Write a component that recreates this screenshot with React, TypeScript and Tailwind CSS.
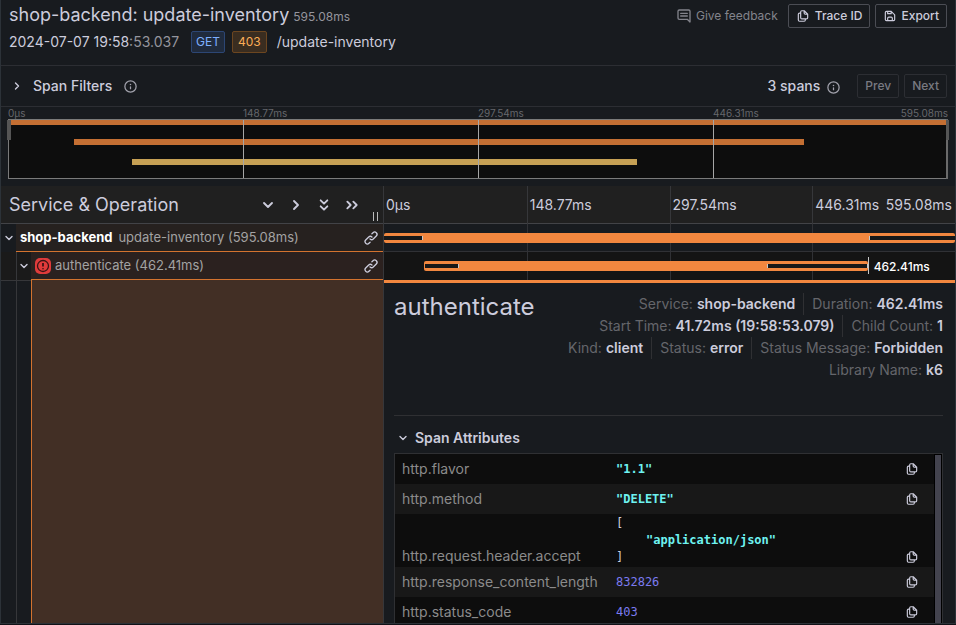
import React from "react";

type IconProps = { d: string; className?: string };

const Glyph = ({ d, className = "size-4" }: IconProps) => (
  <svg viewBox="0 0 24 24" fill="currentColor" className={`shrink-0 ${className}`} aria-hidden="true">
    <path d={d} />
  </svg>
);

const Chevron = ({ d, className = "size-4" }: IconProps) => (
  <svg
    viewBox="0 0 24 24"
    fill="none"
    stroke="currentColor"
    strokeWidth="2.8"
    strokeLinecap="round"
    strokeLinejoin="round"
    className={`shrink-0 ${className}`}
    aria-hidden="true"
  >
    <path d={d} />
  </svg>
);

const COPY =
  "M21,8.94a1.31,1.31,0,0,0-.06-.27l0-.09a1.07,1.07,0,0,0-.19-.28h0l-6-6h0a1.07,1.07,0,0,0-.28-.19.32.32,0,0,0-.09,0A.88.88,0,0,0,14.05,2H10A3,3,0,0,0,7,5V6H6A3,3,0,0,0,3,9V19a3,3,0,0,0,3,3h8a3,3,0,0,0,3-3V18h1a3,3,0,0,0,3-3V9S21,9,21,8.94ZM15,5.41,17.59,8H16a1,1,0,0,1-1-1ZM15,19a1,1,0,0,1-1,1H6a1,1,0,0,1-1-1V9A1,1,0,0,1,6,8H7v7a3,3,0,0,0,3,3h5Zm4-4a1,1,0,0,1-1,1H10a1,1,0,0,1-1-1V5a1,1,0,0,1,1-1h3V7a3,3,0,0,0,3,3h3Z";
const SAVE =
  "m20.71 9.29l-6-6a1 1 0 0 0-.32-.21A1.09 1.09 0 0 0 14 3H6a3 3 0 0 0-3 3v12a3 3 0 0 0 3 3h12a3 3 0 0 0 3-3v-8a1 1 0 0 0-.29-.71ZM9 5h4v2H9Zm6 14H9v-3a1 1 0 0 1 1-1h4a1 1 0 0 1 1 1Zm4-1a1 1 0 0 1-1 1h-1v-3a3 3 0 0 0-3-3h-4a3 3 0 0 0-3 3v3H6a1 1 0 0 1-1-1V6a1 1 0 0 1 1-1h1v3a1 1 0 0 0 1 1h6a1 1 0 0 0 1-1V6.41l4 4Z";
const INFO =
  "M12,2A10,10,0,1,0,22,12,10.01114,10.01114,0,0,0,12,2Zm0,18a8,8,0,1,1,8-8A8.00917,8.00917,0,0,1,12,20Zm0-8.5a1,1,0,0,0-1,1v3a1,1,0,0,0,2,0v-3A1,1,0,0,0,12,11.5Zm0-4a1.25,1.25,0,1,0,1.25,1.25A1.25,1.25,0,0,0,12,7.5Z";
const LINK =
  "M10,17.55,8.23,19.27a2.47,2.47,0,0,1-3.5-3.5l4.54-4.55a2.46,2.46,0,0,1,3.39-.09l.12.1a1,1,0,0,0,1.4-1.43A2.75,2.75,0,0,0,14,9.59a4.46,4.46,0,0,0-6.09.22L3.31,14.36a4.48,4.48,0,0,0,6.33,6.33L11.37,19A1,1,0,0,0,10,17.55ZM20.69,3.31a4.49,4.49,0,0,0-6.33,0L12.63,5A1,1,0,0,0,14,6.45l1.73-1.72a2.47,2.47,0,0,1,3.5,3.5l-4.54,4.55a2.46,2.46,0,0,1-3.39.09l-.12-.1a1,1,0,0,0-1.4,1.43,2.75,2.75,0,0,0,.23.21,4.47,4.47,0,0,0,6.09-.22l4.55-4.55A4.49,4.49,0,0,0,20.69,3.31Z";
const MESSAGE =
  "M17,7H7A1,1,0,0,0,7,9H17a1,1,0,0,0,0-2Zm0,4H7a1,1,0,0,0,0,2H17a1,1,0,0,0,0-2Zm2-9H5A3,3,0,0,0,2,5V15a3,3,0,0,0,3,3H16.59l3.7,3.71A1,1,0,0,0,21,22a.84.84,0,0,0,.38-.08A1,1,0,0,0,22,21V5A3,3,0,0,0,19,2Zm1,16.59-2.29-2.3A1,1,0,0,0,17,16H5a1,1,0,0,1-1-1V5A1,1,0,0,1,5,4H19a1,1,0,0,1,1,1Z";

const DOWN = "M6 9l6 6 6-6";
const RIGHT = "M9 6l6 6-6 6";
const DOUBLE_DOWN = "M7 5l5 5 5-5M7 14l5 5 5-5";
const DOUBLE_RIGHT = "M5 7l5 5-5 5M14 7l5 5-5 5";

const TICKS = ["0µs", "148.77ms", "297.54ms", "446.31ms"];
const TOTAL = "595.08ms";

const FACTS = [
  ["Service:", "shop-backend"],
  ["Duration:", "462.41ms"],
  ["Start Time:", "41.72ms (19:58:53.079)"],
  ["Child Count:", "1"],
  ["Kind:", "client"],
  ["Status:", "error"],
  ["Status Message:", "Forbidden"],
  ["Library Name:", "k6"],
];
const ROW_ENDS = ["Duration:", "Child Count:", "Status Message:", "Library Name:"];

const STRING = "font-bold text-[#6ef2f0]";
const NUMBER = "text-[#7b7bf0]";

const ATTRIBUTES: { name: string; list?: boolean; value: React.ReactNode }[] = [
  { name: "http.flavor", value: <span className={STRING}>"1.1"</span> },
  { name: "http.method", value: <span className={STRING}>"DELETE"</span> },
  {
    name: "http.request.header.accept",
    list: true,
    value: (
      <div className="leading-[17px]">
        <div>[</div>
        <div className={`pl-[30px] ${STRING}`}>"application/json"</div>
        <div>]</div>
      </div>
    ),
  },
  { name: "http.response_content_length", value: <span className={NUMBER}>832826</span> },
  { name: "http.status_code", value: <span className={NUMBER}>403</span> },
];

const Header = () => (
  <header className="flex h-[66px] justify-between border-b border-[#2c2e33] px-2">
    <div>
      <h1 className="flex h-[31px] items-baseline gap-1 text-lg leading-[30px]">
        shop-backend: update-inventory <small className="text-xs text-[#95959d]">595.08ms</small>
      </h1>
      <div className="flex items-center text-sm leading-[22px]">
        <span>
          2024-07-07 19:58<span className="text-[#95959d]">:53.037</span>
        </span>
        <span className="ml-3 flex h-[22px] items-center rounded-xs border border-[#2c4674] bg-[#202b3d] px-1 text-xs text-[#7eb0ff]">
          GET
        </span>
        <span className="ml-[7px] flex h-[22px] items-center rounded-xs border border-[#6c4620] bg-[#3a2d20] px-[5px] text-xs text-[#fbad57]">
          403
        </span>
        <span className="ml-[10px]">/update-inventory</span>
      </div>
    </div>
    <div className="flex h-7 items-end text-xs font-medium">
      <a href="#feedback" className="mr-[10px] flex h-6 items-center gap-1 font-normal text-[#83848c]">
        <Glyph d={MESSAGE} />
        Give feedback
      </a>
      <button className="mr-[5px] flex h-6 items-center gap-[5px] rounded-xs border border-[#4b4d54] px-[7px]">
        <Glyph d={COPY} className="size-[14px]" />
        Trace ID
      </button>
      <button className="flex h-6 items-center gap-1 rounded-xs border border-[#4b4d54] px-[7px]">
        <Glyph d={SAVE} className="size-[14px]" />
        Export
      </button>
    </div>
  </header>
);

const Filters = () => (
  <section className="flex h-[41px] items-center justify-between border-b border-[#2c2e33] px-2">
    <button className="flex items-center text-sm font-medium">
      <Chevron d={RIGHT} className="mr-2 size-4 p-[2px]" />
      Span Filters
      <Glyph d={INFO} className="ml-[11px] size-[15px] text-[#a2a2ac]" />
    </button>
    <div className="flex items-center text-sm font-medium">
      3 spans
      <Glyph d={INFO} className="mt-[2px] mr-4 ml-[6px] size-[15px] text-[#a2a2ac]" />
      <button className="mr-[5px] h-6 rounded-xs border border-[#2c2e33] px-[7px] text-xs text-[#797a82]">Prev</button>
      <button className="h-6 rounded-xs border border-[#2c2e33] px-[7px] text-xs text-[#797a82]">Next</button>
    </div>
  </section>
);

const Minimap = () => (
  <section className="px-[7px] pb-[7px]">
    <div className="flex h-3 text-[10px] leading-3 text-[#66676c]">
      {TICKS.map((t) => (
        <span key={t} className="flex-1">
          {t}
        </span>
      ))}
      <span className="flex w-0 justify-end whitespace-nowrap">{TOTAL}</span>
    </div>
    <svg className="block h-[60px] w-full overflow-visible" shapeRendering="crispEdges" aria-label="Trace overview">
      <rect width="100%" height="60" fill="#0d0d0d" />
      <rect y="1" width="100%" height="5" fill="#c46f33" />
      <rect x="7%" y="20" width="77.7%" height="6" fill="#c46f33" />
      <rect x="13.2%" y="40" width="53.7%" height="6" fill="#c6a054" />
      <rect x="25%" width="1" height="60" fill="#a6a6a6" />
      <rect x="50%" width="1" height="60" fill="#a6a6a6" />
      <rect x="75%" width="1" height="60" fill="#a6a6a6" />
      <rect width="100%" height="1" fill="#7a7a7a" />
      <rect y="59" width="100%" height="1" fill="#7a7a7a" />
      <rect width="1" height="60" fill="#7a7a7a" />
      <g transform="translate(-2 0)">
        <rect x="100%" width="2" height="60" fill="#6a6a6a" />
        <rect x="100%" y="1" width="3" height="20" fill="#555" />
      </g>
      <rect x="-1" y="1" width="4" height="20" fill="#555" />
    </svg>
  </section>
);

const TimeGrid = ({ children, className = "" }: { children?: React.ReactNode; className?: string }) => (
  <div className={`relative grid grid-cols-4 ${className}`}>
    {TICKS.map((t, i) => (
      <div key={t} className={i === 0 ? "" : "border-l border-[#303135]"} />
    ))}
    {children}
  </div>
);

const Critical = ({ className }: { className: string }) => (
  <div className={`absolute top-[3px] h-1 border-[#c8c8c8] bg-[#181818] ${className}`} />
);

const TimelineHeader = () => (
  <div className="grid h-[38px] grid-cols-[383px_1fr] border-b border-[#424347] bg-[#202020]">
    <div className="flex items-center border-r border-[#36373a] pl-2">
      <h2 className="flex-1 text-lg leading-none">Service &amp; Operation</h2>
      <div className="flex gap-3">
        <button aria-label="Expand one level">
          <Chevron d={DOWN} />
        </button>
        <button aria-label="Collapse one level">
          <Chevron d={RIGHT} />
        </button>
        <button aria-label="Expand all">
          <Chevron d={DOUBLE_DOWN} />
        </button>
        <button aria-label="Collapse all">
          <Chevron d={DOUBLE_RIGHT} />
        </button>
      </div>
      <div className="mb-[3px] ml-[13px] mr-[5px] h-[9px] w-[5px] self-end border-x border-[#bbb]" />
    </div>
    <div className="grid grid-cols-4 text-sm leading-[38px]">
      {TICKS.map((t, i) => (
        <div
          key={t}
          className={`flex justify-between whitespace-nowrap ${i === 0 ? "pl-[2px]" : "border-l border-[#36373a] pl-[2px]"}`}
        >
          <span>{t}</span>
          {i === 3 && <span className="pr-[3px]">{TOTAL}</span>}
        </div>
      ))}
    </div>
  </div>
);

const SpanRows = () => (
  <>
    <div className="grid h-7 grid-cols-[383px_1fr]">
      <div className="flex border-r border-[#36373a]">
        <button aria-label="Toggle shop-backend" className="flex w-[15px] items-center justify-center">
          <Chevron d={DOWN} className="size-3" />
        </button>
        <div className="flex flex-1 items-center border-b border-[#d4732f] bg-[#26211f] pl-1 pr-1 text-[13px]">
          <strong className="mr-[6px] font-bold text-white">shop-backend</strong>
          <span className="flex-1 text-[#a3a3a3]">update-inventory (595.08ms)</span>
          <a href="#span-1" aria-label="Link to update-inventory">
            <Glyph d={LINK} />
          </a>
        </div>
      </div>
      <TimeGrid className="border-b border-[#303135]">
        <div className="absolute inset-x-0 top-[9px] h-[10px] rounded-xs bg-[#f2873f]">
          <Critical className="left-0 w-[39px] border-r" />
          <Critical className="right-0 w-[86px] border-l" />
        </div>
      </TimeGrid>
    </div>
    <div className="grid h-7 grid-cols-[383px_1fr]">
      <div className="flex border-r border-[#36373a]">
        <div className="w-4 border-r border-[#36373a] bg-[#1a1a1a]" />
        <button
          aria-label="Toggle authenticate"
          className="flex w-[14px] items-center justify-center bg-[#1a1a1a]"
        >
          <Chevron d={DOWN} className="size-3" />
        </button>
        <div className="flex flex-1 items-center border-b border-[#d4732f] bg-[#2b211f] pl-1 pr-1 text-[13px]">
          <svg viewBox="0 0 16 16" className="mr-1 size-4 shrink-0" aria-label="Error">
            <rect width="16" height="16" rx="5" fill="#e03b3b" />
            <circle cx="8" cy="8" r="5.5" fill="none" stroke="#3a1414" strokeWidth="1.3" />
            <path d="M8 5v3.4M8 10.2v1" stroke="#3a1414" strokeWidth="1.8" />
          </svg>
          <span className="flex-1 text-[#a3a3a3]">authenticate (462.41ms)</span>
          <a href="#span-2" aria-label="Link to authenticate">
            <Glyph d={LINK} />
          </a>
        </div>
      </div>
      <TimeGrid className="bg-[#141414]">
        <div className="absolute left-[7%] top-[9px] h-[10px] w-[77.7%] rounded-xs bg-[#f2873f]">
          <Critical className="left-px w-[34px] border-r" />
          <Critical className="right-0 w-[101px] border-x" />
        </div>
        <div className="absolute left-[84.7%] top-[5px] h-[17px] border-l border-[#c8c8c8] pl-[5px] text-xs leading-[19px] font-medium text-white">
          462.41ms
        </div>
      </TimeGrid>
    </div>
  </>
);

const Detail = () => (
  <div className="grid min-h-0 flex-1 grid-cols-[383px_1fr]">
    <div className="flex border-r border-[#36373a]">
      <div className="w-4 border-r border-t border-[#36373a]" />
      <div className="w-[14px] border-t border-[#36373a]" />
      <div className="flex-1 border-l border-[#d4732f] bg-[#422f25]" />
    </div>
    <div className="flex min-h-0 flex-col border-t-3 border-[#f2873f] pr-3 pl-[10px]">
      <div className="flex h-[133px] items-start border-b border-[#2f3033] pt-[10px]">
        <h2 className="text-2xl leading-7">authenticate</h2>
        <dl className="flex flex-1 flex-wrap justify-end text-sm leading-[22px]">
          {FACTS.map(([k, v]) => (
            <div
              key={k}
              className={`flex gap-1 pl-2 ${ROW_ENDS.includes(k) ? "" : "border-r border-[#2f3033] pr-2"}`}
            >
              <dt className="text-[#65666b]">{k}</dt>
              <dd className="font-semibold">{v}</dd>
            </div>
          ))}
        </dl>
      </div>
      <button className="mt-[11px] flex h-[22px] items-center gap-[6px] pl-[3px] text-left text-sm font-semibold">
        <Chevron d={DOWN} className="size-3" />
        Span Attributes
      </button>
      <div className="mt-1 flex min-h-0 flex-1 overflow-hidden border border-b-0 border-[#2f3033] bg-black">
        <div className="flex-1">
          <table className="w-full border-collapse text-sm">
            <tbody>
              {ATTRIBUTES.map((a) => (
                <tr key={a.name} className="odd:bg-[#0d0d0d] even:bg-[#181818]">
                  <th
                    scope="row"
                    className={`w-[214px] pl-[7px] text-left align-bottom font-normal text-[#8b8b8b] ${a.list ? "pb-px leading-5" : "pb-[2px] leading-[26px]"}`}
                  >
                    {a.name}
                  </th>
                  <td className="py-px pl-[7px] font-['DejaVu_Sans_Mono',monospace] text-xs leading-7">{a.value}</td>
                  <td className={`w-[29px] align-bottom ${a.list ? "pb-[3px]" : "pb-2"}`}>
                    <button aria-label={`Copy ${a.name}`} className="block">
                      <Glyph d={COPY} className="size-[14px]" />
                    </button>
                  </td>
                </tr>
              ))}
            </tbody>
          </table>
        </div>
        <div className="mx-px mt-px w-[6px] bg-[#43434e]" />
      </div>
    </div>
  </div>
);

export default function App() {
  return (
    <main className="flex h-screen flex-col overflow-hidden bg-[#111217] pb-px font-[Inter,sans-serif] text-[#ccccdc]">
      <div className="flex min-h-0 flex-1 flex-col border border-t-0 border-[#2c3238] bg-[#181b1f]">
        <Header />
        <Filters />
        <Minimap />
        <TimelineHeader />
        <SpanRows />
        <Detail />
      </div>
    </main>
  );
}
